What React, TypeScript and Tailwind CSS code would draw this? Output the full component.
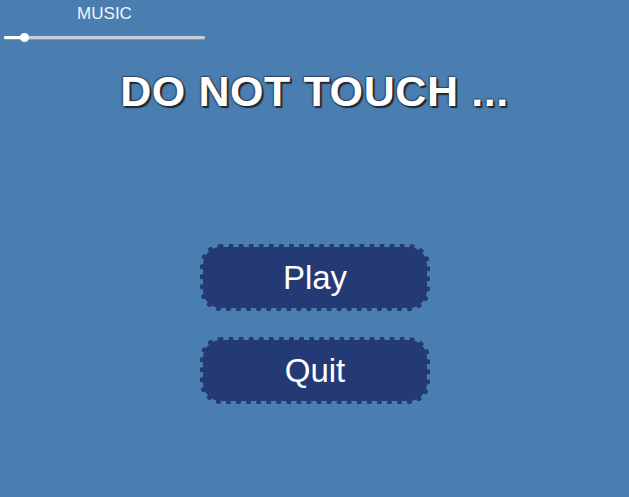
export default function App() {
  return (
    <div
      className="relative w-[629px] h-[497px] overflow-hidden bg-[#4a7eb0] text-white"
      style={{ fontFamily: '"Liberation Sans", Arial, sans-serif' }}
    >
      {/* music volume */}
      <div className="absolute left-0 top-0 w-[209px] flex flex-col items-start">
        <div className="mt-[5px] w-[209px] text-center text-[17px] leading-[18px] text-[#f2f5fa]">MUSIC</div>
        <div className="relative mt-[13px] ml-[4px] w-[201px] h-[3px] rounded-full bg-[#c9ced6] shadow-[0_1px_0_#8a96a6]">
          <div className="absolute left-0 top-0 h-[3px] w-[20px] rounded-full bg-white" />
          <div className="absolute left-[16px] top-[-3px] w-[9px] h-[9px] rounded-full bg-white" />
        </div>
      </div>

      <h1
        className="absolute left-0 right-0 top-[66px] text-center text-[43px] leading-[50px] font-bold tracking-[0.6px]"
        style={{
          textShadow:
            "2px 2px 1px #23272f, 1px 1px 0 #3a3f48, -1px -1px 1px rgba(30,35,45,0.45), 1px -1px 1px rgba(30,35,45,0.35), -1px 1px 1px rgba(30,35,45,0.35)",
        }}
      >
        DO NOT TOUCH ...
      </h1>

      {/* menu buttons with scalloped edge */}
      <div className="absolute left-[203px] top-[247px] flex flex-col gap-[32px]">
        {["Play", "Quit"].map((label) => (
          <button
            key={label}
            className="w-[224px] h-[61px] rounded-[18px] bg-[#243a75] outline-[5px] outline-dotted outline-[#243a75] outline-offset-[-2px] text-[33px] text-white flex items-center justify-center"
          >
            {label}
          </button>
        ))}
      </div>
    </div>
  );
}
